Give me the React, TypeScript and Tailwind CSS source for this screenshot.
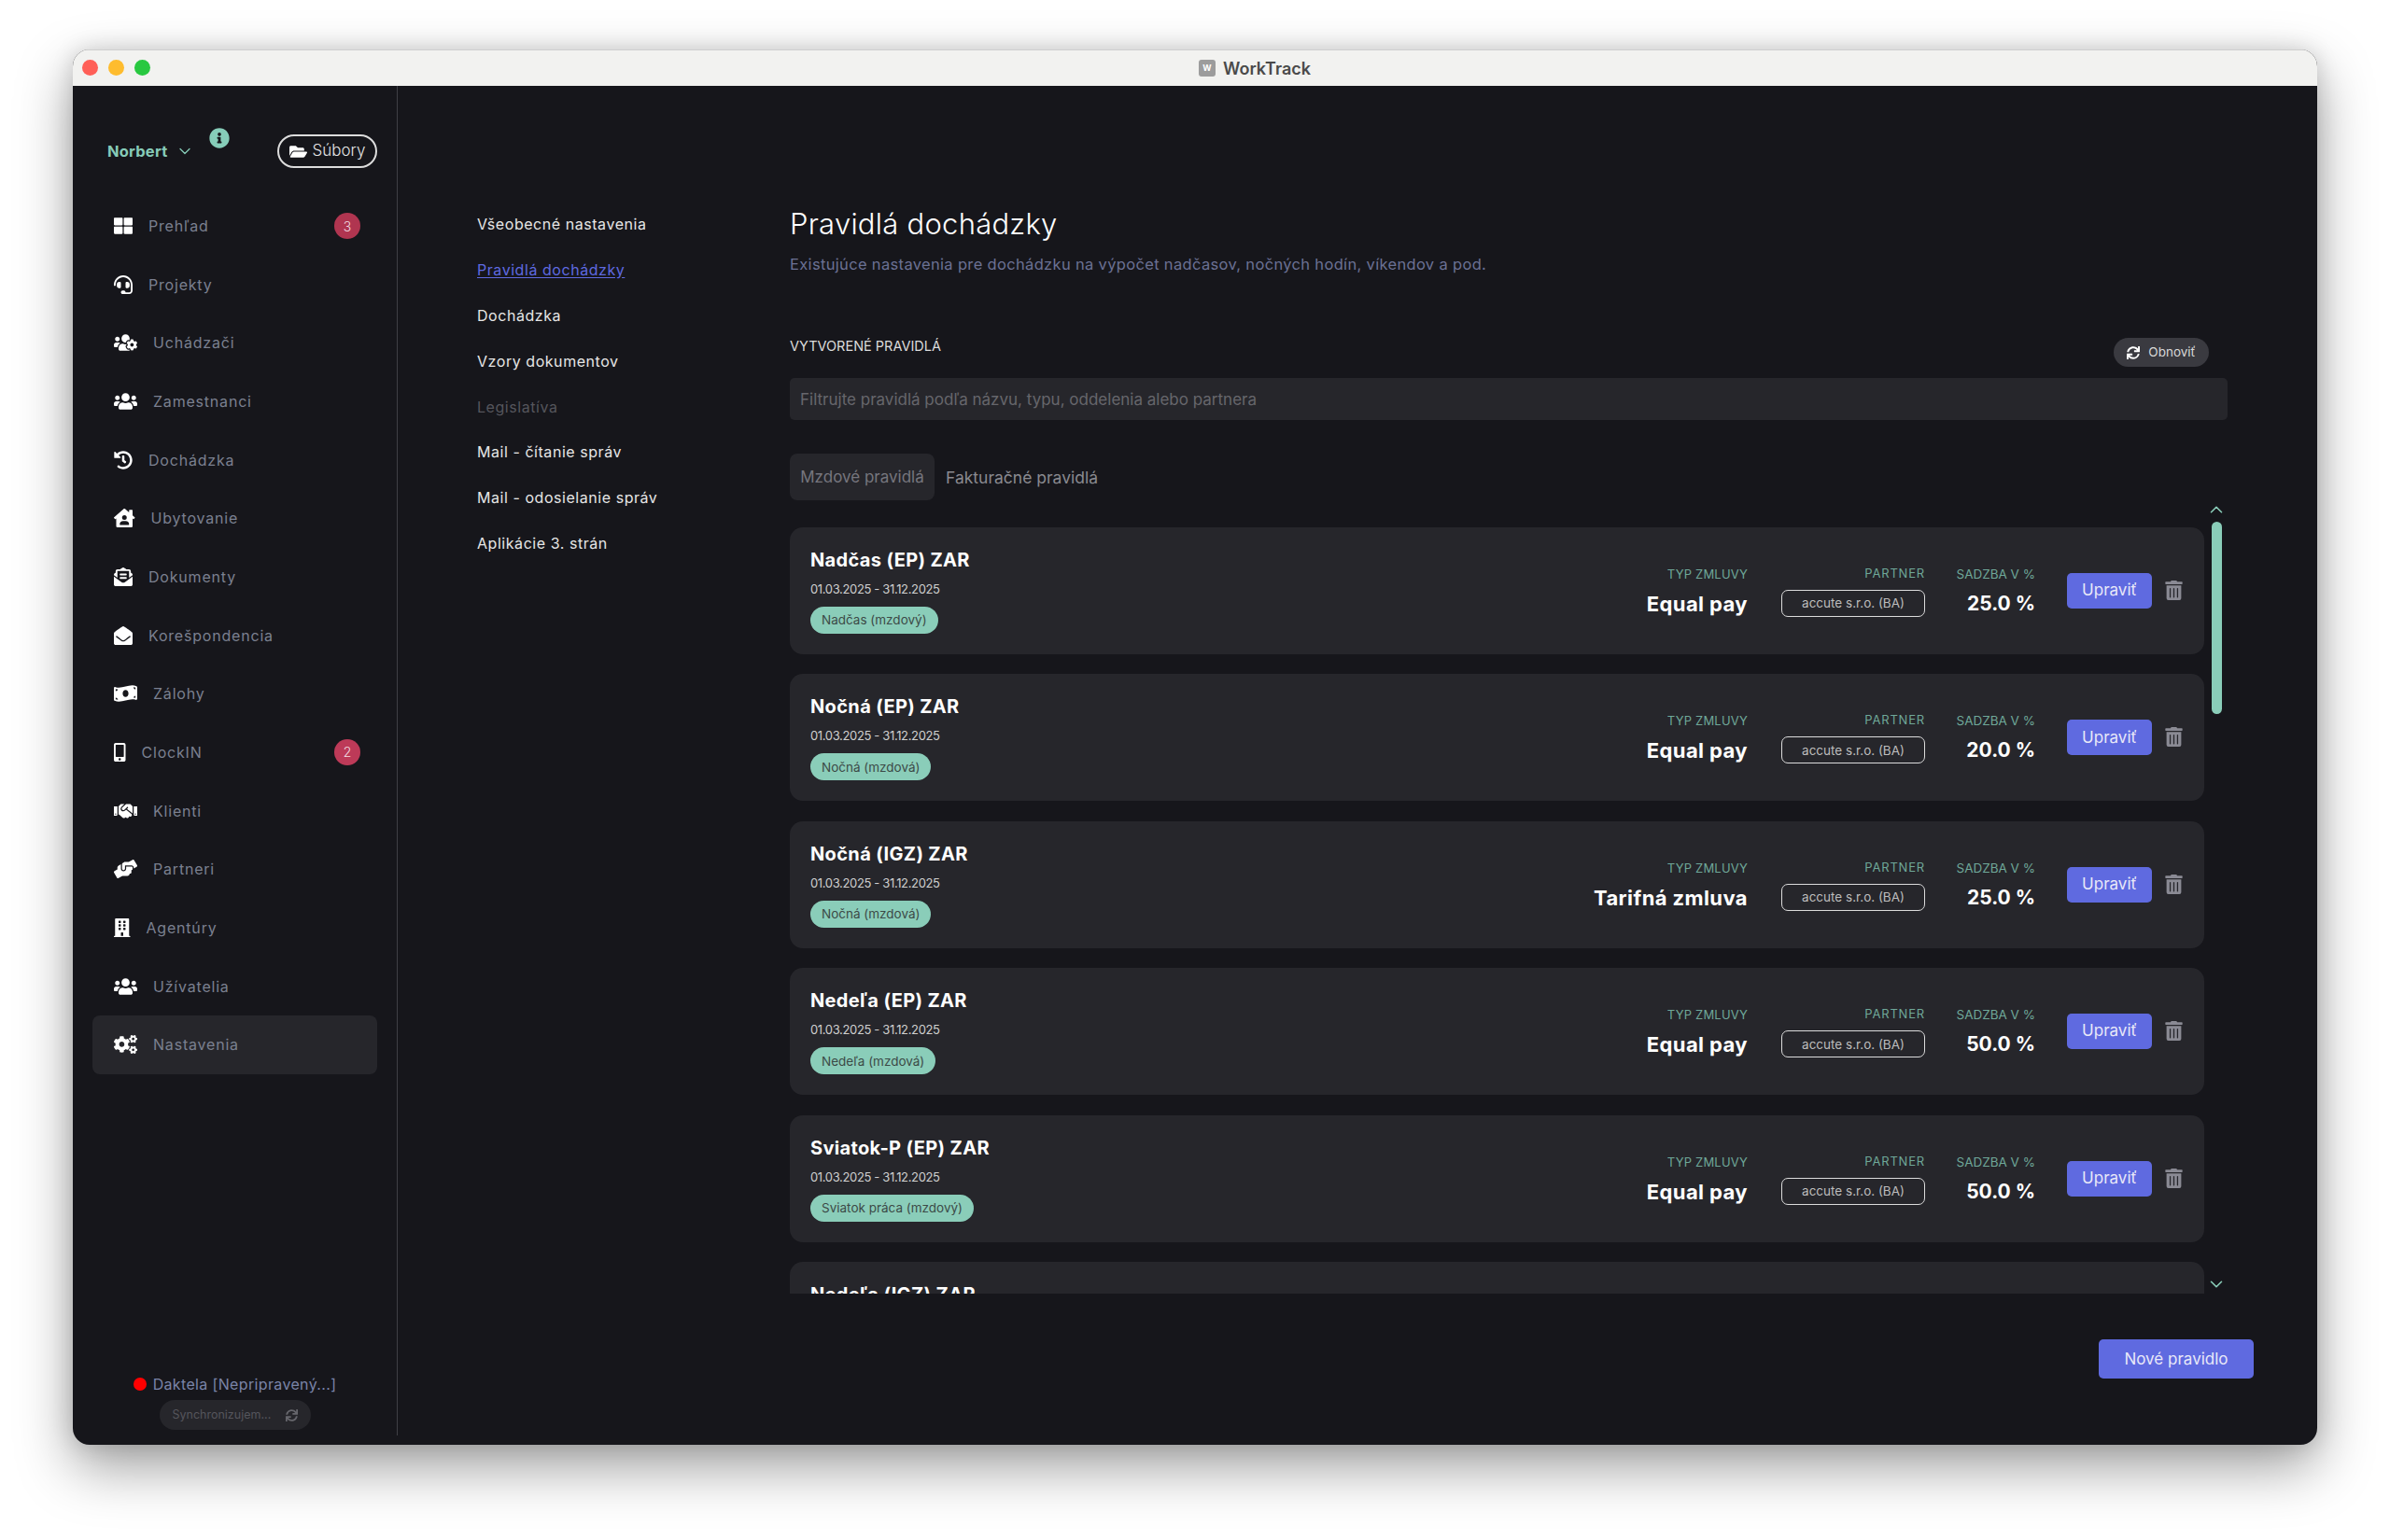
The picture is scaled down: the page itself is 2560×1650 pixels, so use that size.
import { ChevronDown, ChevronUp } from 'lucide-react';
import type { IconType } from 'react-icons';
import {
  FaBuilding,
  FaCogs,
  FaEnvelopeOpen,
  FaEnvelopeOpenText,
  FaFolderOpen,
  FaHandshake,
  FaHandsHelping,
  FaHeadset,
  FaHistory,
  FaHouseUser,
  FaInfoCircle,
  FaMobileAlt,
  FaMoneyBillWave,
  FaSync,
  FaThLarge,
  FaTrashAlt,
  FaUsers,
  FaUsersCog,
} from 'react-icons/fa';

type NavItem = {
  label: string;
  icon: IconType;
  iconWidth: string;
  badge?: string;
  badgeClass?: string;
  active?: boolean;
};

const navItems: NavItem[] = [
  { label: 'Prehľad', icon: FaThLarge, iconWidth: 'w-[20px]', badge: '3', badgeClass: 'bg-[#b03550]' },
  { label: 'Projekty', icon: FaHeadset, iconWidth: 'w-[20px]' },
  { label: 'Uchádzači', icon: FaUsersCog, iconWidth: 'w-[25px]' },
  { label: 'Zamestnanci', icon: FaUsers, iconWidth: 'w-[25px]' },
  { label: 'Dochádzka', icon: FaHistory, iconWidth: 'w-[20px]' },
  { label: 'Ubytovanie', icon: FaHouseUser, iconWidth: 'w-[22.5px]' },
  { label: 'Dokumenty', icon: FaEnvelopeOpenText, iconWidth: 'w-[20px]' },
  { label: 'Korešpondencia', icon: FaEnvelopeOpen, iconWidth: 'w-[20px]' },
  { label: 'Zálohy', icon: FaMoneyBillWave, iconWidth: 'w-[25px]' },
  { label: 'ClockIN', icon: FaMobileAlt, iconWidth: 'w-[12.5px]', badge: '2', badgeClass: 'bg-[#bd3a58]' },
  { label: 'Klienti', icon: FaHandshake, iconWidth: 'w-[25px]' },
  { label: 'Partneri', icon: FaHandsHelping, iconWidth: 'w-[25px]' },
  { label: 'Agentúry', icon: FaBuilding, iconWidth: 'w-[17.5px]' },
  { label: 'Užívatelia', icon: FaUsers, iconWidth: 'w-[25px]' },
  { label: 'Nastavenia', icon: FaCogs, iconWidth: 'w-[25px]', active: true },
];

const settingsLinks = [
  { label: 'Všeobecné nastavenia', cls: 'text-[#e6e6e6]' },
  { label: 'Pravidlá dochádzky', cls: 'text-[#5f6ae0] underline underline-offset-2' },
  { label: 'Dochádzka', cls: 'text-[#e6e6e6]' },
  { label: 'Vzory dokumentov', cls: 'text-[#e6e6e6]' },
  { label: 'Legislatíva', cls: 'text-[#55555c]' },
  { label: 'Mail - čítanie správ', cls: 'text-[#e6e6e6]' },
  { label: 'Mail - odosielanie správ', cls: 'text-[#e6e6e6]' },
  { label: 'Aplikácie 3. strán', cls: 'text-[#e6e6e6]' },
];

const rules = [
  { title: 'Nadčas (EP) ZAR', tag: 'Nadčas (mzdový)', contract: 'Equal pay', rate: '25.0 %' },
  { title: 'Nočná (EP) ZAR', tag: 'Nočná (mzdová)', contract: 'Equal pay', rate: '20.0 %' },
  { title: 'Nočná (IGZ) ZAR', tag: 'Nočná (mzdová)', contract: 'Tarifná zmluva', rate: '25.0 %' },
  { title: 'Nedeľa (EP) ZAR', tag: 'Nedeľa (mzdová)', contract: 'Equal pay', rate: '50.0 %' },
  { title: 'Sviatok-P (EP) ZAR', tag: 'Sviatok práca (mzdový)', contract: 'Equal pay', rate: '50.0 %' },
  { title: 'Nedeľa (IGZ) ZAR', tag: 'Nedeľa (mzdová)', contract: 'Equal pay', rate: '50.0 %' },
];

function Sidebar() {
  return (
    <aside className="mb-[10px] flex w-[348px] shrink-0 flex-col border-r border-[#3f3f45] px-[21px] pt-[52px] pb-[6px]">
      <div className="flex h-[36px] items-center">
        <span className="ml-[16px] text-[16.5px] font-bold tracking-[0.2px] text-[#86cbb8]">Norbert</span>
        <ChevronDown className="ml-[9px] text-[#86cbb8]" size={20} strokeWidth={1.5} />
        <FaInfoCircle className="mt-[-7px] ml-[16px] self-start text-[#86cdb9]" size={22} />
        <button className="ml-auto flex h-[36px] w-[107px] items-center justify-center gap-[6px] rounded-[18px] border-2 border-[#dcdcdc] text-[17px] font-light text-[#e4e4e4]">
          <FaFolderOpen size={19} className="text-white" />
          <span>Súbory</span>
        </button>
      </div>
      <nav className="mt-[30.7px] flex flex-col">
        {navItems.map((item) => {
          const Icon = item.icon;
          return (
            <div
              key={item.label}
              className={`flex h-[62.67px] items-center gap-[17px] rounded-[8px] pr-[18px] pl-[23px] ${
                item.active ? 'bg-[#26262b]' : ''
              }`}
            >
              <Icon className={`h-[20px] shrink-0 text-white ${item.iconWidth}`} />
              <span className="text-[16px] tracking-[0.8px] text-[#7b8090]">{item.label}</span>
              {item.badge && (
                <span
                  className={`ml-auto flex h-[28px] w-[28px] items-center justify-center rounded-full text-[14px] font-light text-[#f3dfe3] ${item.badgeClass}`}
                >
                  {item.badge}
                </span>
              )}
            </div>
          );
        })}
      </nav>
      <div className="mt-auto flex flex-col items-center">
        <div className="flex h-[24px] items-center">
          <span className="h-[14px] w-[14px] rounded-full bg-[#ff0000]" />
          <span className="ml-[7px] text-[16px] tracking-[0.35px] text-[#7a84a8]">Daktela [Nepripravený...]</span>
        </div>
        <div className="mt-[5px] flex h-[32px] w-[162px] items-center justify-between rounded-full bg-[#26262b] pr-[14px] pl-[14px]">
          <span className="text-[12.5px] text-[#55555c]">Synchronizujem...</span>
          <FaSync size={13} className="text-[#66666c]" />
        </div>
      </div>
    </aside>
  );
}

function SettingsNav() {
  return (
    <nav className="flex w-[420px] shrink-0 flex-col pt-[124px] pl-[85px]">
      {settingsLinks.map((link) => (
        <div key={link.label} className={`flex h-[48.8px] items-center text-[16px] tracking-[0.55px] ${link.cls}`}>
          <span>{link.label}</span>
        </div>
      ))}
    </nav>
  );
}

function RuleCard({ rule }: { rule: (typeof rules)[number] }) {
  return (
    <div className="flex h-[136px] shrink-0 items-start justify-between rounded-[14px] bg-[#26262b] pr-[22px] pl-[22px]">
      <div className="flex flex-col items-start pt-[22px]">
        <div className="h-[26px] text-[20px] leading-[26px] font-bold tracking-[0.35px] text-white">{rule.title}</div>
        <div className="mt-[9px] h-[18px] text-[13px] leading-[18px] tracking-[-0.35px] text-[#cfcfcf]">
          01.03.2025 - 31.12.2025
        </div>
        <div className="mt-[10px] flex h-[29px] items-center rounded-full bg-[#8acdb9] px-[12px] text-[13.5px] text-[#3c4a47]">
          {rule.tag}
        </div>
      </div>
      <div className="flex items-start pt-[42px]">
        <div className="flex flex-col items-end">
          <div className="h-[16px] text-[13px] leading-[16px] tracking-[0.2px] text-[#6fa899]">TYP ZMLUVY</div>
          <div className="mt-[11px] h-[26px] text-[22px] leading-[26px] font-bold tracking-[0.4px] text-white">
            {rule.contract}
          </div>
        </div>
        <div className="mt-[-1px] ml-[36px] flex flex-col items-end">
          <div className="h-[16px] text-[13px] leading-[16px] tracking-[0.8px] text-[#6fa899]">PARTNER</div>
          <div className="mt-[10px] flex h-[29px] w-[154px] items-center justify-center rounded-[7px] border-[1.5px] border-[#dcdcdc] text-[13.5px] text-[#bdbdbd]">
            accute s.r.o. (BA)
          </div>
        </div>
        <div className="ml-[35px] flex w-[83px] flex-col items-end">
          <div className="h-[16px] text-[13.5px] leading-[16px] whitespace-nowrap text-[#6fa899]">SADZBA V %</div>
          <div className="mt-[11px] h-[26px] text-[21px] leading-[26px] font-bold text-white">{rule.rate}</div>
        </div>
        <button className="mt-[7px] ml-[34px] h-[38px] w-[91px] rounded-[5px] bg-[#5f6ae0] text-[17px] text-[#e8e8f8]">
          Upraviť
        </button>
        <FaTrashAlt size={21} className="mt-[15px] ml-[13px] text-[#8a8a94]" />
      </div>
    </div>
  );
}

function RulesContent() {
  return (
    <main className="flex w-[1568px] flex-col pt-[128px]">
      <h1 className="h-[40px] text-[31px] leading-[40px] font-light tracking-[0.25px] text-white">Pravidlá dochádzky</h1>
      <p className="mt-[11px] h-[24px] text-[16.5px] leading-[24px] tracking-[0.33px] text-[#6b7194]">
        Existujúce nastavenia pre dochádzku na výpočet nadčasov, nočných hodín, víkendov a pod.
      </p>
      <div className="mt-[67px] flex h-[31px] items-start justify-between pr-[48px]">
        <span className="text-[14.5px] leading-[18px] text-[#dcdcdc]">VYTVORENÉ PRAVIDLÁ</span>
        <button className="flex h-[31px] w-[102px] items-center justify-center gap-[9px] rounded-full bg-[#3a3a40] text-[13.5px] text-[#d8d8d8]">
          <FaSync size={14} className="text-white" />
          <span>Obnoviť</span>
        </button>
      </div>
      <input
        readOnly
        placeholder="Filtrujte pravidlá podľa názvu, typu, oddelenia alebo partnera"
        className="mt-[12px] h-[45px] w-[1540px] rounded-[5px] bg-[#26262b] px-[11px] text-[17px] outline-none placeholder:text-[#66666c]"
      />
      <div className="mt-[36px] flex h-[50px] items-stretch">
        <div className="flex w-[155px] items-center justify-center rounded-[8px] bg-[#26262b] pt-[2px] text-[17px] text-[#76767e]">
          Mzdové pravidlá
        </div>
        <div className="ml-[12px] flex items-center pt-[2px] text-[17.5px] text-[#8a8a90]">Fakturačné pravidlá</div>
      </div>
      <div className="mt-[5px] flex h-[845px]">
        <div className="flex w-[1515px] flex-col gap-[21.4px] overflow-hidden pt-[24px]">
          {rules.map((rule) => (
            <RuleCard key={rule.title} rule={rule} />
          ))}
        </div>
        <div className="ml-[7px] flex w-[12px] flex-col items-center">
          <ChevronUp size={22} strokeWidth={1.75} className="mt-[-6px] shrink-0 text-[#8acdb9]" />
          <div className="mt-[2px] h-[206px] w-[11px] shrink-0 rounded-full bg-[#8acdb9]" />
          <ChevronDown size={22} strokeWidth={1.75} className="mt-auto mb-[-1px] shrink-0 text-[#8acdb9]" />
        </div>
      </div>
      <button className="mt-[49px] h-[42px] w-[166px] self-end rounded-[5px] bg-[#5f6ae0] pt-[1px] text-[17px] text-[#e8e8f8]">
        Nové pravidlo
      </button>
    </main>
  );
}

export default function App() {
  return (
    <div className="h-[1650px] w-[2560px] overflow-hidden bg-white pt-[53px] pl-[78px] font-['Inter','Liberation_Sans',sans-serif]">
      <div className="flex h-[1495px] w-[2404px] flex-col overflow-hidden rounded-[18px] bg-[#16161b] shadow-[0_24px_60px_rgba(0,0,0,0.38),0_0_24px_rgba(0,0,0,0.14)]">
        <header className="relative flex h-[39px] shrink-0 items-center justify-center border-t border-[#cfcfcf] bg-[#f2f2f0]">
          <div className="absolute top-[10px] left-[10px] flex gap-[11px]">
            <span className="h-[17px] w-[17px] rounded-full bg-[#ff5f57]" />
            <span className="h-[17px] w-[17px] rounded-full bg-[#febc2e]" />
            <span className="h-[17px] w-[17px] rounded-full bg-[#28c840]" />
          </div>
          <div className="ml-[128px] flex items-center gap-[8px]">
            <span className="flex h-[18px] w-[18px] items-center justify-center rounded-[3px] bg-[#9c9c9c] text-[9px] font-bold text-white">
              W
            </span>
            <span className="text-[18px] font-semibold text-[#4a4a4a]">WorkTrack</span>
          </div>
        </header>
        <div className="flex min-h-0 flex-1">
          <Sidebar />
          <SettingsNav />
          <RulesContent />
        </div>
      </div>
    </div>
  );
}
